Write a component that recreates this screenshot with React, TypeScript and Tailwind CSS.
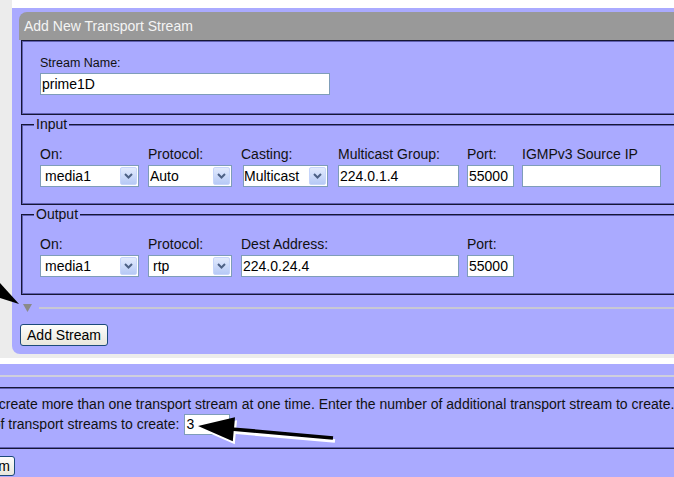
import React from "react";

const LAV = "bg-[#aaaaff]";
const FIELDSET =
  "border border-[#161634] shadow-[inset_1px_1px_0_#5f5fb0,inset_-1px_-1px_0_#5f5fb0]";

function Chevron() {
  return (
    <svg width="9" height="6" viewBox="0 0 9 6">
      <path d="M1 1 L4.5 4.5 L8 1" fill="none" stroke="#4d6185" strokeWidth="2" />
    </svg>
  );
}

function Dropdown({
  value,
  options,
  className,
  pad,
}: {
  value: string;
  options: string[];
  className: string;
  pad: string;
}) {
  return (
    <div className={`relative h-[22px] border border-[#7f9db9] bg-white ${className}`}>
      <select
        defaultValue={value}
        className={`block h-full w-full appearance-none bg-transparent text-[14px] leading-[20px] text-black outline-none ${pad}`}
      >
        {options.map((o) => (
          <option key={o}>{o}</option>
        ))}
      </select>
      <span className="pointer-events-none absolute right-[1px] top-[1px] flex h-[18px] w-[17px] items-center justify-center rounded-[2px] border border-[#c6d5fb] bg-linear-to-b from-[#e3ebfd] to-[#b6c9f6]">
        <Chevron />
      </span>
    </div>
  );
}

function TextBox({ value, className }: { value: string; className: string }) {
  return (
    <input
      defaultValue={value}
      className={`block h-[22px] border border-[#7f9db9] bg-white px-[1px] text-[14px] leading-[20px] text-black outline-none ${className}`}
    />
  );
}

function Label({ children }: { children: React.ReactNode }) {
  return <div className="mb-[2px] h-[17px] whitespace-nowrap leading-[17px] text-[#111]">{children}</div>;
}

function XpButton({ children, className }: { children: React.ReactNode; className: string }) {
  return (
    <button
      className={`block rounded-[3px] border border-[#1c4a7a] bg-linear-to-b from-[#fdfdfb] to-[#e8e6dc] text-[14px] leading-[18px] text-black ${className}`}
    >
      {children}
    </button>
  );
}

export default function App() {
  return (
    <div className="relative h-[477px] w-[674px] overflow-hidden bg-white font-['Liberation_Sans',Arial,sans-serif] text-[14px] text-black">
      {/* stream editor */}
      <div className="bg-[#ececec] pb-[4px] pl-[12px]">
        <div className="h-[8px] bg-white" />
        <div className={`${LAV} w-[720px] rounded-bl-[8px] pb-[8px] pl-[7px] pt-[4px]`}>
          <div className="flex h-[28px] items-center rounded-tl-[8px] bg-[#999999] pl-[5px] text-[14px] text-[#f4f4f4]">
            Add New Transport Stream
          </div>

          <div className="ml-[2px]">
            <fieldset className={`${FIELDSET}`}>
              <div className="pb-[19px] pl-[18px] pt-[14px]">
                <div className="mb-[1px] h-[17px] text-[12.5px] leading-[17px] text-[#111]">Stream Name:</div>
                <TextBox value="prime1D" className="w-[290px]" />
              </div>
            </fieldset>

            <fieldset className={`${FIELDSET} mt-[1px]`}>
              <legend className={`${LAV} ml-[12px] px-[2px] leading-[16px] text-[#111]`}>Input</legend>
              <div className="flex pb-[17px] pl-[18px] pt-[14px]">
                <div className="w-[99px]">
                  <Label>On:</Label>
                  <Dropdown value="media1" options={["media1", "media2"]} className="w-[99px]" pad="pl-[4px]" />
                </div>
                <div className="ml-[9px] w-[84px]">
                  <Label>Protocol:</Label>
                  <Dropdown value="Auto" options={["Auto", "rtp", "udp"]} className="w-[84px]" pad="pl-[1px]" />
                </div>
                <div className="ml-[9px] w-[87px]">
                  <Label>Casting:</Label>
                  <Dropdown
                    value="Multicast"
                    options={["Multicast", "Unicast"]}
                    className="ml-[2px] w-[85px]"
                    pad="pl-0"
                  />
                </div>
                <div className="ml-[10px] w-[121px]">
                  <Label>Multicast Group:</Label>
                  <TextBox value="224.0.1.4" className="w-[121px]" />
                </div>
                <div className="ml-[8px] w-[47px]">
                  <Label>Port:</Label>
                  <TextBox value="55000" className="w-[47px]" />
                </div>
                <div className="ml-[8px] w-[139px]">
                  <Label>IGMPv3 Source IP</Label>
                  <TextBox value="" className="w-[139px]" />
                </div>
              </div>
            </fieldset>

            <fieldset className={`${FIELDSET} mt-[1px]`}>
              <legend className={`${LAV} ml-[12px] px-[2px] leading-[16px] text-[#111]`}>Output</legend>
              <div className="flex pb-[17px] pl-[18px] pt-[14px]">
                <div className="w-[99px]">
                  <Label>On:</Label>
                  <Dropdown value="media1" options={["media1", "media2"]} className="w-[99px]" pad="pl-[4px]" />
                </div>
                <div className="ml-[9px] w-[84px]">
                  <Label>Protocol:</Label>
                  <Dropdown value="rtp" options={["rtp", "udp"]} className="w-[84px]" pad="pl-[4px]" />
                </div>
                <div className="ml-[9px] w-[218px]">
                  <Label>Dest Address:</Label>
                  <TextBox value="224.0.24.4" className="w-[218px]" />
                </div>
                <div className="ml-[8px] w-[47px]">
                  <Label>Port:</Label>
                  <TextBox value="55000" className="w-[47px]" />
                </div>
              </div>
            </fieldset>

            {/* advanced options toggle */}
            <div className="mt-[7px] flex h-[12px] items-center">
              <svg width="9" height="8" viewBox="0 0 9 8" className="ml-[2px]">
                <path d="M0 0 H9 L4.5 8 Z" fill="#8a8a8a" />
              </svg>
              <div className="ml-[7px] h-[2px] flex-1 bg-[#c8c8d4]" />
            </div>

            <XpButton className="ml-[-1px] mt-[10px] h-[22px] w-[88px]">Add Stream</XpButton>
          </div>
        </div>
      </div>
      <div className="h-[6px] bg-white" />

      {/* bulk creation */}
      <div className={`${LAV} h-[120px]`}>
        <div className="h-[11px]" />
        <div className="h-[2px] bg-[#cfcfdc]" />
        <fieldset className={`${FIELDSET} ml-[-100px] mt-[10px] w-[800px]`}>
          <div className="pb-[13px] pl-[40px] pt-[8px]">
            <p className="h-[17px] whitespace-nowrap leading-[17px] text-[#111]">
              You may create more than one transport stream at one time. Enter the number of additional transport
              stream to create.
            </p>
            <div className="mt-[1px] flex items-center whitespace-nowrap text-[#111]">
              <span className="ml-[-2px]">Number of transport streams to create:</span>
              <input
                defaultValue="3"
                className="ml-[5px] block h-[21px] w-[46px] border border-[#7f9db9] bg-white px-[1px] text-[14px] text-black outline-none"
              />
            </div>
          </div>
        </fieldset>
        <XpButton className="ml-[-69px] mt-[7px] h-[20px] w-[84px]">Add Stream</XpButton>
      </div>

      {/* callouts */}
      <svg className="pointer-events-none absolute left-0 top-0" width="674" height="477" viewBox="0 0 674 477">
        <polygon points="0,283 19,304 0,298" fill="#000" />
        <polygon
          points="200,429 237,420.2 236.1,430.4 335.2,439.2 334.8,442.8 235.7,434 234.8,444.2"
          fill="#fff"
        />
        <polygon
          points="198,426 235,417.2 234.1,427.4 333.2,436.2 332.8,439.8 233.7,431 232.8,441.2"
          fill="#000"
        />
      </svg>
    </div>
  );
}
